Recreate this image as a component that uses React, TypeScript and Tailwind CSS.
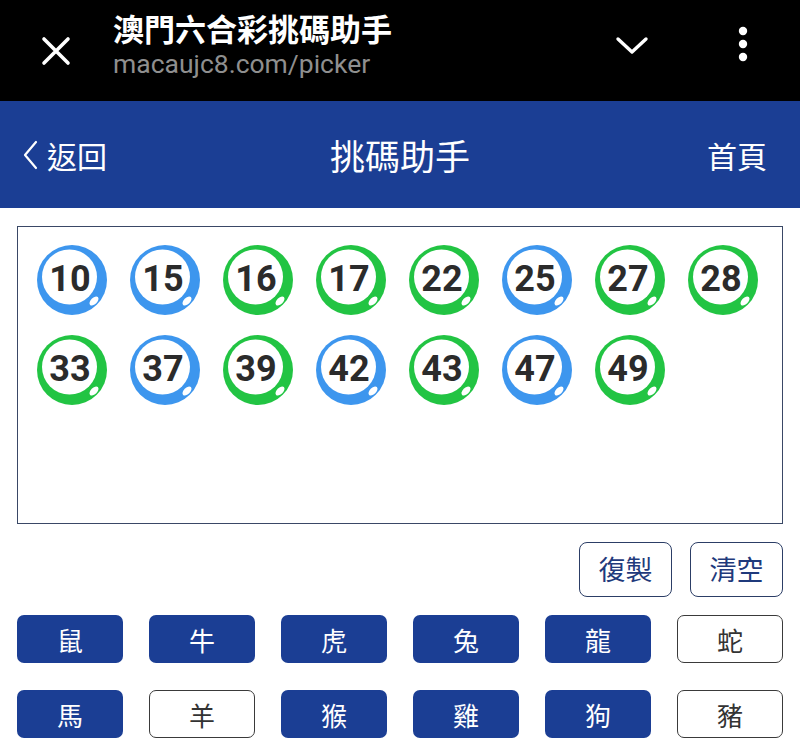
import React from "react";

const CJK = { fontFamily: '"Noto Sans CJK TC", "Noto Sans", sans-serif' };

type BallT = { n: string; c: "b" | "g" };
const balls: BallT[] = [
  { n: "10", c: "b" }, { n: "15", c: "b" }, { n: "16", c: "g" }, { n: "17", c: "g" },
  { n: "22", c: "g" }, { n: "25", c: "b" }, { n: "27", c: "g" }, { n: "28", c: "g" },
  { n: "33", c: "g" }, { n: "37", c: "b" }, { n: "39", c: "g" }, { n: "42", c: "b" },
  { n: "43", c: "g" }, { n: "47", c: "b" }, { n: "49", c: "g" },
];

const zodiac: { t: string; f: boolean }[] = [
  { t: "鼠", f: true }, { t: "牛", f: true }, { t: "虎", f: true }, { t: "兔", f: true },
  { t: "龍", f: true }, { t: "蛇", f: false }, { t: "馬", f: true }, { t: "羊", f: false },
  { t: "猴", f: true }, { t: "雞", f: true }, { t: "狗", f: true }, { t: "豬", f: false },
];

function Ball({ n, c }: BallT) {
  const col = c === "b" ? "#3d96ee" : "#22c443";
  return (
    <svg width="70" height="70" viewBox="0 0 70 70" className="shrink-0">
      <circle cx="35" cy="35" r="35" fill={col} />
      <circle cx="32.5" cy="32" r="27.5" fill="#ffffff" />
      <ellipse cx="57" cy="56" rx="5.5" ry="3.2" fill="#ffffff" transform="rotate(-45 57 56)" />
      <text
        x="33"
        y="34"
        textAnchor="middle"
        dominantBaseline="central"
        fontFamily="Roboto, 'Liberation Sans', sans-serif"
        fontWeight="700"
        fontSize="36"
        fill="#2b2b2b"
      >
        {n}
      </text>
    </svg>
  );
}

export default function App() {
  return (
    <div className="w-[800px] h-[745px] bg-white overflow-hidden" style={CJK}>
      {/* Browser bar */}
      <div className="h-[101px] bg-black flex items-center">
        <div className="w-[113px] flex justify-center pr-[2px]">
          <svg width="30" height="30" viewBox="0 0 30 30">
            <path d="M3 3 L27 27 M27 3 L3 27" stroke="#fff" strokeWidth="3.6" strokeLinecap="round" />
          </svg>
        </div>
        <div className="flex-1 flex flex-col -mt-[12px]">
          <div className="text-white font-bold text-[31px] leading-[36px]">澳門六合彩挑碼助手</div>
          <div
            className="text-[#8f8f8f] text-[26.5px] leading-[32px] mt-[2px]"
            style={{ fontFamily: "Roboto, 'Liberation Sans', sans-serif" }}
          >
            macaujc8.com/picker
          </div>
        </div>
        <div className="w-[80px] flex justify-center -mt-[12px] mr-[51px]">
          <svg width="34" height="20" viewBox="0 0 34 20">
            <path d="M3 4 L17 17 L31 4" stroke="#fff" strokeWidth="3.4" fill="none" strokeLinecap="round" strokeLinejoin="round" />
          </svg>
        </div>
        <div className="w-[40px] flex justify-center -mt-[14px] mr-[37px]">
          <svg width="10" height="36" viewBox="0 0 10 36">
            <circle cx="5" cy="5" r="4.2" fill="#fff" />
            <circle cx="5" cy="18" r="4.2" fill="#fff" />
            <circle cx="5" cy="31" r="4.2" fill="#fff" />
          </svg>
        </div>
      </div>

      {/* App header */}
      <div className="h-[107px] bg-[#1b3e94] flex items-center justify-between px-[22px] text-white">
        <div className="flex items-center w-[150px]">
          <svg width="18" height="30" viewBox="0 0 18 30" className="mr-[7px]">
            <path d="M14 2 L3 15 L14 28" stroke="#fff" strokeWidth="2.2" fill="none" strokeLinecap="round" strokeLinejoin="round" />
          </svg>
          <span className="text-[30px] leading-none">返回</span>
        </div>
        <div className="text-[35px] leading-none">挑碼助手</div>
        <div className="w-[150px] text-right text-[30px] leading-none pr-[11px]">首頁</div>
      </div>

      {/* Content */}
      <div className="px-[17px] pt-[18px]">
        <div className="h-[298px] border border-[#3a4866] pl-[19px] pt-[18px] pr-[10px]">
          <div className="flex flex-wrap gap-x-[23px] gap-y-[20px]">
            {balls.map((b) => (
              <Ball key={b.n} n={b.n} c={b.c} />
            ))}
          </div>
        </div>

        <div className="flex justify-end gap-[18px] mt-[18px]">
          {["復製", "清空"].map((t) => (
            <div
              key={t}
              className="w-[93px] h-[55px] border-[1.5px] border-[#2c3e66] rounded-[8px] flex items-center justify-center text-[27px] text-[#1f3a7c]"
            >
              {t}
            </div>
          ))}
        </div>

        <div className="grid grid-cols-6 gap-x-[26px] gap-y-[27px] mt-[18px]">
          {zodiac.map((z) => (
            <div
              key={z.t}
              className={
                z.f
                  ? "h-[48px] rounded-[7px] bg-[#1b3e94] text-white flex items-center justify-center text-[26px]"
                  : "h-[48px] rounded-[7px] bg-white border-[1.5px] border-[#3a3a3a] text-[#333333] flex items-center justify-center text-[26px]"
              }
            >
              {z.t}
            </div>
          ))}
        </div>
      </div>
    </div>
  );
}
